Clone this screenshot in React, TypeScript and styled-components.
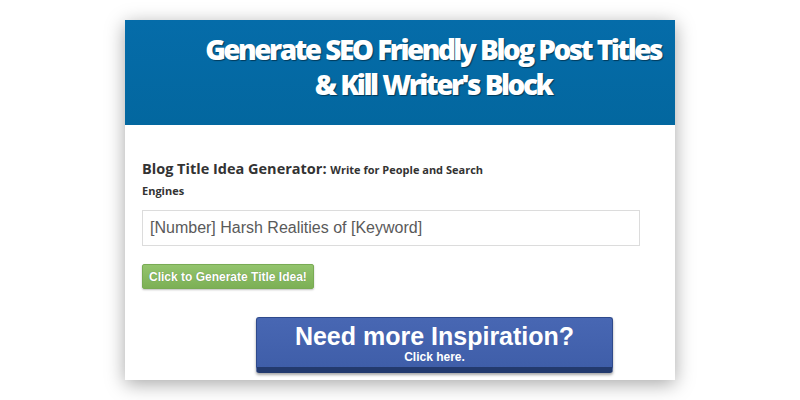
import React from "react";
import styled, { createGlobalStyle } from "styled-components";

const GlobalStyle = createGlobalStyle`
  body {
    margin: 0;
    background: #ffffff;
    font-family: "Open Sans", Arial, sans-serif;
  }
`;

const Page = styled.div`
  width: 800px;
  height: 400px;
  padding-top: 20px;
  box-sizing: border-box;
  overflow: hidden;
`;

const Card = styled.div`
  width: 550px;
  height: 360px;
  margin: 0 auto;
  background: #ffffff;
  box-shadow: 0 4px 18px rgba(0, 0, 0, 0.35);
  display: flex;
  flex-direction: column;
`;

const Header = styled.div`
  height: 105px;
  background: linear-gradient(#056ca9, #03679f);
  display: flex;
  align-items: flex-start;
  justify-content: center;
  padding: 12px 0 0 66px;
  box-sizing: border-box;
`;

const Headline = styled.h1`
  margin: 0;
  color: #ffffff;
  font-family: "Open Sans", sans-serif;
  font-weight: 800;
  font-size: 28px;
  line-height: 35px;
  letter-spacing: -2.55px;
  word-spacing: 1px;
  white-space: nowrap;
  text-align: center;
  text-shadow: 1px 1px 1px rgba(0, 0, 0, 0.45);
`;

const Body = styled.div`
  padding: 34px 35px 0 17px;
  display: flex;
  flex-direction: column;
  align-items: flex-start;
`;

const Label = styled.div`
  width: 350px;
  color: #333333;
  font-family: "Open Sans", sans-serif;
  font-weight: 700;
  font-size: 14.5px;
  line-height: 20px;
`;

const SubLabel = styled.span`
  font-size: 11px;
  line-height: 20px;
`;

const TitleInput = styled.input`
  margin-top: 9px;
  width: 498px;
  height: 36px;
  box-sizing: border-box;
  border: 1px solid #dcdcdc;
  padding: 0 7px;
  font-family: "Liberation Sans", Arial, sans-serif;
  font-size: 16px;
  color: #5a5a5a;
  outline: none;
`;

const GenerateButton = styled.button`
  margin-top: 18px;
  height: 25px;
  padding: 0 6px;
  border: 1px solid #79ab54;
  border-radius: 2px;
  background: linear-gradient(#93c46d, #7cb055);
  color: #ffffff;
  font-family: "Liberation Sans", Arial, sans-serif;
  font-weight: 700;
  font-size: 12px;
  text-shadow: 0 0 1px rgba(0, 0, 0, 0.3);
  box-shadow: 0 1px 2px rgba(0, 0, 0, 0.25);
  cursor: pointer;
`;

const InspireButton = styled.button`
  margin: 28px 0 0 114px;
  width: 357px;
  height: 56px;
  box-sizing: border-box;
  padding: 0 0 6px;
  border: 1px solid #2f4a8c;
  border-bottom: 6px solid #233a6e;
  border-radius: 3px;
  background: linear-gradient(#4867b3, #3f5ea9);
  color: #ffffff;
  font-family: "Liberation Sans", Arial, sans-serif;
  font-weight: 700;
  box-shadow: 0 2px 3px rgba(0, 0, 0, 0.35);
  display: flex;
  flex-direction: column;
  align-items: center;
  justify-content: flex-start;
  cursor: pointer;
`;

const InspireTitle = styled.span`
  font-size: 25px;
  line-height: 30px;
  margin-top: 3px;
`;

const InspireSub = styled.span`
  font-size: 12px;
  line-height: 12px;
`;

export default function App() {
  return (
    <>
      <GlobalStyle />
      <Page>
        <Card>
          <Header>
            <Headline>
              Generate SEO Friendly Blog Post Titles
              <br />& Kill Writer's Block
            </Headline>
          </Header>
          <Body>
            <Label>
              Blog Title Idea Generator: <SubLabel>Write for People and Search Engines</SubLabel>
            </Label>
            <TitleInput defaultValue="[Number] Harsh Realities of [Keyword]" />
            <GenerateButton>Click to Generate Title Idea!</GenerateButton>
            <InspireButton>
              <InspireTitle>Need more Inspiration?</InspireTitle>
              <InspireSub>Click here.</InspireSub>
            </InspireButton>
          </Body>
        </Card>
      </Page>
    </>
  );
}
